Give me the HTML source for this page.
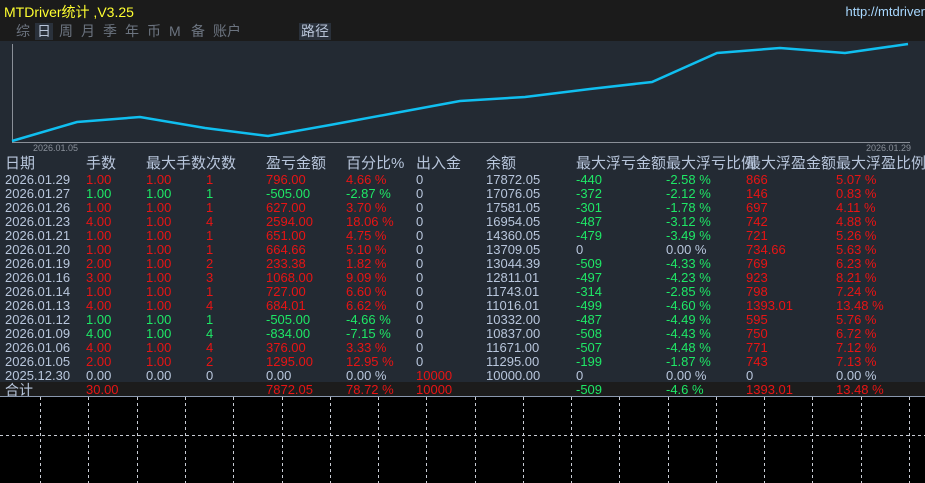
<!DOCTYPE html>
<html><head><meta charset="utf-8"><style>
*{margin:0;padding:0;box-sizing:border-box}
body{width:925px;height:483px;background:#000;position:relative;overflow:hidden;font-family:"Liberation Sans","Noto Sans CJK SC",sans-serif;color:#b8c6dc}
#top{position:absolute;left:0;top:0;width:925px;height:41px;background:#1b1b1b}
#title{position:absolute;left:4px;top:2px;font-size:14px;color:#ffff30}
#url{position:absolute;right:0;top:4px;font-size:13px;color:#a8d8ff}
.tab{position:absolute;top:23px;font-size:14px;color:#6c7480;height:17px;line-height:17px;padding:0 2px}
.tab.on{background:#2a313b;color:#b8c4d8}
#mid{position:absolute;left:0;top:41px;width:925px;height:341px;background:#232a33}
.r{position:absolute;left:0;width:925px;height:14px;font-size:13px;line-height:14px;white-space:nowrap}
.r span{position:absolute;top:0}
.r span:nth-child(1){left:5px}.r span:nth-child(2){left:86px}.r span:nth-child(3){left:146px}.r span:nth-child(4){left:206px}
.r span:nth-child(5){left:266px}.r span:nth-child(6){left:346px}.r span:nth-child(7){left:416px}.r span:nth-child(8){left:486px}
.r span:nth-child(9){left:576px}.r span:nth-child(10){left:666px}.r span:nth-child(11){left:746px}.r span:nth-child(12){left:836px}
.h{font-size:15px;height:18px;line-height:18px;color:#b8c6dc}
.R{color:#e81414}.G{color:#1ee866}.W{color:#b8c6dc}
#tot{position:absolute;left:0;top:382px;width:925px;height:14px;background:#1c1c1c}
#line{position:absolute;left:0;top:396px;width:925px;height:1px;background:#8a98ae}
</style></head><body>
<div id="top">
<div id="title">MTDriver统计 ,V3.25</div>
<div id="url">http://mtdriver</div>
<div class="tab" style="left:14px">综</div>
<div class="tab on" style="left:35px">日</div>
<div class="tab" style="left:57px">周</div>
<div class="tab" style="left:79px">月</div>
<div class="tab" style="left:101px">季</div>
<div class="tab" style="left:123px">年</div>
<div class="tab" style="left:145px">币</div>
<div class="tab" style="left:167px">M</div>
<div class="tab" style="left:189px">备</div>
<div class="tab" style="left:211px">账户</div>
<div class="tab on" style="left:299px">路径</div>
</div>
<div id="mid"></div>
<svg style="position:absolute;left:0;top:41px" width="925" height="115">
<line x1="12.5" y1="3" x2="12.5" y2="101" stroke="#8a8f98"/>
<line x1="12" y1="101.5" x2="910" y2="101.5" stroke="#8a8f98"/>
<polyline fill="none" stroke="#10bff0" stroke-width="2.5" points="12,100 77,81 140,76 205,87 268,95 330,84 395,72 460,60 525,56 590,48 652,41 717,12 780,7 845,12 908,3"/>
<text x="33" y="110" font-size="9" fill="#8a909a" font-family="Liberation Sans">2026.01.05</text>
<text x="866" y="110" font-size="9" fill="#8a909a" font-family="Liberation Sans">2026.01.29</text>
</svg>
<div class="r h" style="top:155px"><span>日期</span><span>手数</span><span>最大手数</span><span>次数</span><span>盈亏金额</span><span>百分比%</span><span>出入金</span><span>余额</span><span>最大浮亏金额</span><span>最大浮亏比例</span><span>最大浮盈金额</span><span>最大浮盈比例</span></div>
<div class="r" style="top:173px"><span>2026.01.29</span><span class="R">1.00</span><span class="R">1.00</span><span class="R">1</span><span class="R">796.00</span><span class="R">4.66 %</span><span>0</span><span>17872.05</span><span class="G">-440</span><span class="G">-2.58 %</span><span class="R">866</span><span class="R">5.07 %</span></div>
<div class="r" style="top:187px"><span>2026.01.27</span><span class="G">1.00</span><span class="G">1.00</span><span class="G">1</span><span class="G">-505.00</span><span class="G">-2.87 %</span><span>0</span><span>17076.05</span><span class="G">-372</span><span class="G">-2.12 %</span><span class="R">146</span><span class="R">0.83 %</span></div>
<div class="r" style="top:201px"><span>2026.01.26</span><span class="R">1.00</span><span class="R">1.00</span><span class="R">1</span><span class="R">627.00</span><span class="R">3.70 %</span><span>0</span><span>17581.05</span><span class="G">-301</span><span class="G">-1.78 %</span><span class="R">697</span><span class="R">4.11 %</span></div>
<div class="r" style="top:215px"><span>2026.01.23</span><span class="R">4.00</span><span class="R">1.00</span><span class="R">4</span><span class="R">2594.00</span><span class="R">18.06 %</span><span>0</span><span>16954.05</span><span class="G">-487</span><span class="G">-3.12 %</span><span class="R">742</span><span class="R">4.88 %</span></div>
<div class="r" style="top:229px"><span>2026.01.21</span><span class="R">1.00</span><span class="R">1.00</span><span class="R">1</span><span class="R">651.00</span><span class="R">4.75 %</span><span>0</span><span>14360.05</span><span class="G">-479</span><span class="G">-3.49 %</span><span class="R">721</span><span class="R">5.26 %</span></div>
<div class="r" style="top:243px"><span>2026.01.20</span><span class="R">1.00</span><span class="R">1.00</span><span class="R">1</span><span class="R">664.66</span><span class="R">5.10 %</span><span>0</span><span>13709.05</span><span>0</span><span>0.00 %</span><span class="R">734.66</span><span class="R">5.63 %</span></div>
<div class="r" style="top:257px"><span>2026.01.19</span><span class="R">2.00</span><span class="R">1.00</span><span class="R">2</span><span class="R">233.38</span><span class="R">1.82 %</span><span>0</span><span>13044.39</span><span class="G">-509</span><span class="G">-4.33 %</span><span class="R">769</span><span class="R">6.23 %</span></div>
<div class="r" style="top:271px"><span>2026.01.16</span><span class="R">3.00</span><span class="R">1.00</span><span class="R">3</span><span class="R">1068.00</span><span class="R">9.09 %</span><span>0</span><span>12811.01</span><span class="G">-497</span><span class="G">-4.23 %</span><span class="R">923</span><span class="R">8.21 %</span></div>
<div class="r" style="top:285px"><span>2026.01.14</span><span class="R">1.00</span><span class="R">1.00</span><span class="R">1</span><span class="R">727.00</span><span class="R">6.60 %</span><span>0</span><span>11743.01</span><span class="G">-314</span><span class="G">-2.85 %</span><span class="R">798</span><span class="R">7.24 %</span></div>
<div class="r" style="top:299px"><span>2026.01.13</span><span class="R">4.00</span><span class="R">1.00</span><span class="R">4</span><span class="R">684.01</span><span class="R">6.62 %</span><span>0</span><span>11016.01</span><span class="G">-499</span><span class="G">-4.60 %</span><span class="R">1393.01</span><span class="R">13.48 %</span></div>
<div class="r" style="top:313px"><span>2026.01.12</span><span class="G">1.00</span><span class="G">1.00</span><span class="G">1</span><span class="G">-505.00</span><span class="G">-4.66 %</span><span>0</span><span>10332.00</span><span class="G">-487</span><span class="G">-4.49 %</span><span class="R">595</span><span class="R">5.76 %</span></div>
<div class="r" style="top:327px"><span>2026.01.09</span><span class="G">4.00</span><span class="G">1.00</span><span class="G">4</span><span class="G">-834.00</span><span class="G">-7.15 %</span><span>0</span><span>10837.00</span><span class="G">-508</span><span class="G">-4.43 %</span><span class="R">750</span><span class="R">6.72 %</span></div>
<div class="r" style="top:341px"><span>2026.01.06</span><span class="R">4.00</span><span class="R">1.00</span><span class="R">4</span><span class="R">376.00</span><span class="R">3.33 %</span><span>0</span><span>11671.00</span><span class="G">-507</span><span class="G">-4.48 %</span><span class="R">771</span><span class="R">7.12 %</span></div>
<div class="r" style="top:355px"><span>2026.01.05</span><span class="R">2.00</span><span class="R">1.00</span><span class="R">2</span><span class="R">1295.00</span><span class="R">12.95 %</span><span>0</span><span>11295.00</span><span class="G">-199</span><span class="G">-1.87 %</span><span class="R">743</span><span class="R">7.13 %</span></div>
<div class="r" style="top:369px"><span>2025.12.30</span><span>0.00</span><span>0.00</span><span>0</span><span>0.00</span><span>0.00 %</span><span class="R">10000</span><span>10000.00</span><span>0</span><span>0.00 %</span><span>0</span><span>0.00 %</span></div>
<div id="tot"></div>
<div class="r" style="top:383px"><span style="font-size:14px">合计</span><span class="R">30.00</span><span></span><span></span><span class="R">7872.05</span><span class="R">78.72 %</span><span class="R">10000</span><span></span><span class="G">-509</span><span class="G">-4.6 %</span><span class="R">1393.01</span><span class="R">13.48 %</span></div>
<div id="line"></div>
<svg style="position:absolute;left:0;top:397px" width="925" height="86">
<g stroke="#c8ccd4" stroke-width="1" stroke-dasharray="3,3">
<line x1="0" y1="38.5" x2="925" y2="38.5"/>
<line x1="40.5" y1="0" x2="40.5" y2="86"/><line x1="88.5" y1="0" x2="88.5" y2="86"/><line x1="137.5" y1="0" x2="137.5" y2="86"/><line x1="185.5" y1="0" x2="185.5" y2="86"/><line x1="233.5" y1="0" x2="233.5" y2="86"/><line x1="282.5" y1="0" x2="282.5" y2="86"/><line x1="330.5" y1="0" x2="330.5" y2="86"/><line x1="378.5" y1="0" x2="378.5" y2="86"/><line x1="426.5" y1="0" x2="426.5" y2="86"/><line x1="475.5" y1="0" x2="475.5" y2="86"/><line x1="523.5" y1="0" x2="523.5" y2="86"/><line x1="571.5" y1="0" x2="571.5" y2="86"/><line x1="619.5" y1="0" x2="619.5" y2="86"/><line x1="668.5" y1="0" x2="668.5" y2="86"/><line x1="716.5" y1="0" x2="716.5" y2="86"/><line x1="764.5" y1="0" x2="764.5" y2="86"/><line x1="812.5" y1="0" x2="812.5" y2="86"/><line x1="861.5" y1="0" x2="861.5" y2="86"/><line x1="909.5" y1="0" x2="909.5" y2="86"/>
</g></svg>
</body></html>
